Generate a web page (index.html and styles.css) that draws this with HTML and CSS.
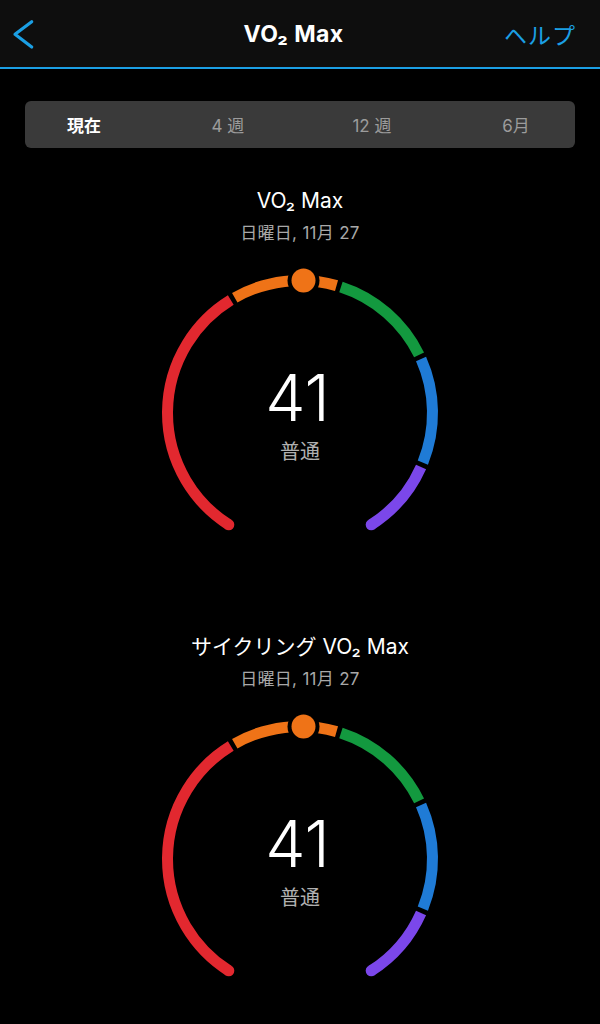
FILE: index.html
```html
<!DOCTYPE html>
<html lang="ja">
<head>
    <meta charset="UTF-8">
    <meta name="viewport" content="width=device-width, initial-scale=1.0">
    <title>VO₂ Max</title>
    <link rel="stylesheet" href="styles.css">
</head>
<body>

    <div class="header">
        <div class="back">
            <svg width="24" height="32" viewBox="0 0 24 32">
                <polyline points="19.7,3.7 3,16.3 19.7,29" fill="none" stroke="#1b9fe4" stroke-width="3.2" stroke-linecap="round" stroke-linejoin="round"/>
            </svg>
        </div>
        <div class="title">VO₂ Max</div>
        <div class="help">ヘルプ</div>
    </div>

    <div class="segment">
        <div class="tabs">
            <div class="tab active">現在</div>
            <div class="tab">4 週</div>
            <div class="tab">12 週</div>
            <div class="tab">6月</div>
        </div>
    </div>

    <div class="gauges">

        <section class="gauge-card">
            <h2 class="gauge-title">VO₂ Max</h2>
            <p class="gauge-date">日曜日, 11月 27</p>
            <div class="gauge-wrap">
                <svg width="300" height="275" viewBox="0 0 300 275">
                    <g fill="none" stroke-width="11">
                        <path d="M78.81 259.75 A132.5 132.5 0 0 1 80.77 35.03" stroke="#e2282f"/>
                        <path d="M84.76 32.67 A132.5 132.5 0 0 1 186.52 20.63" stroke="#ef7317"/>
                        <path d="M190.94 21.98 A132.5 132.5 0 0 1 269.09 89.91" stroke="#13993f"/>
                        <path d="M271.04 94.11 A132.5 132.5 0 0 1 272.85 197.63" stroke="#1f7bd6"/>
                        <path d="M271.04 201.89 A132.5 132.5 0 0 1 221.19 259.75" stroke="#7b47ea"/>
                    </g>
                    <circle cx="78.81" cy="259.75" r="5.5" fill="#e2282f"/>
                    <circle cx="221.19" cy="259.75" r="5.5" fill="#7b47ea"/>
                    <circle cx="153.5" cy="15.5" r="16" fill="#000"/>
                    <circle cx="153.5" cy="15.5" r="12" fill="#ef7317"/>
                </svg>
                <div class="gauge-center">
                    <div class="gauge-value">41</div>
                    <div class="gauge-label">普通</div>
                </div>
            </div>
        </section>

        <section class="gauge-card">
            <h2 class="gauge-title">サイクリング VO₂ Max</h2>
            <p class="gauge-date">日曜日, 11月 27</p>
            <div class="gauge-wrap">
                <svg width="300" height="275" viewBox="0 0 300 275">
                    <g fill="none" stroke-width="11">
                        <path d="M78.81 259.75 A132.5 132.5 0 0 1 80.77 35.03" stroke="#e2282f"/>
                        <path d="M84.76 32.67 A132.5 132.5 0 0 1 186.52 20.63" stroke="#ef7317"/>
                        <path d="M190.94 21.98 A132.5 132.5 0 0 1 269.09 89.91" stroke="#13993f"/>
                        <path d="M271.04 94.11 A132.5 132.5 0 0 1 272.85 197.63" stroke="#1f7bd6"/>
                        <path d="M271.04 201.89 A132.5 132.5 0 0 1 221.19 259.75" stroke="#7b47ea"/>
                    </g>
                    <circle cx="78.81" cy="259.75" r="5.5" fill="#e2282f"/>
                    <circle cx="221.19" cy="259.75" r="5.5" fill="#7b47ea"/>
                    <circle cx="153.5" cy="15.5" r="16" fill="#000"/>
                    <circle cx="153.5" cy="15.5" r="12" fill="#ef7317"/>
                </svg>
                <div class="gauge-center">
                    <div class="gauge-value">41</div>
                    <div class="gauge-label">普通</div>
                </div>
            </div>
        </section>

    </div>

</body>
</html>
```

FILE: styles.css
```css
body {
    margin: 0;
    padding: 0;
    background-color: #000;
    color: #fff;
    font-family: Inter, "Noto Sans CJK JP", sans-serif;
    min-height: 1024px;
}
.header {
    display: grid;
    grid-template-columns: 1fr auto 1fr;
    align-items: center;
    height: 67px;
    padding: 0 25px 0 12px;
    background-color: #0e0e0e;
    border-bottom: 2px solid #1b9fe4;
}
.back svg {
    display: block;
}
.title {
    font-size: 23px;
    font-weight: bold;
    letter-spacing: 0.4px;
}
.help {
    justify-self: end;
    color: #1b9fe4;
    font-size: 23px;
    font-family: "Noto Sans CJK JP", sans-serif;
    letter-spacing: 1px;
    margin-right: -1px;
}
.segment {
    margin: 32px 25px 0;
    height: 47px;
    background-color: #3a3a3a;
    border-radius: 6px;
}
.tabs {
    display: flex;
    align-items: center;
    height: 100%;
    margin: 0 -13px;
}
.tab {
    flex: 1;
    text-align: center;
    font-size: 17px;
    color: #9c9c9c;
}
.tab.active {
    color: #fff;
    font-weight: bold;
}
.gauges {
    display: flex;
    flex-direction: column;
    gap: 94px;
    margin-top: 40px;
}
.gauge-card {
    text-align: center;
}
.gauge-title {
    margin: 0;
    font-size: 21px;
    line-height: 26px;
    font-weight: normal;
}
.gauge-date {
    margin: 9px 0 0;
    font-size: 17px;
    line-height: 20px;
    color: #a8a8a8;
    letter-spacing: 0.3px;
}
.gauge-wrap {
    position: relative;
    width: 300px;
    height: 275px;
    margin: 22px auto 0;
}
.gauge-wrap svg {
    display: block;
}
.gauge-center {
    position: absolute;
    left: 0;
    right: 0;
    top: 101px;
}
.gauge-value {
    font-size: 64px;
    line-height: 64px;
    font-weight: 300;
    margin-left: -5px;
}
.gauge-label {
    margin-top: 10px;
    font-size: 20px;
    line-height: 24px;
    color: #b0b0b0;
}
```
